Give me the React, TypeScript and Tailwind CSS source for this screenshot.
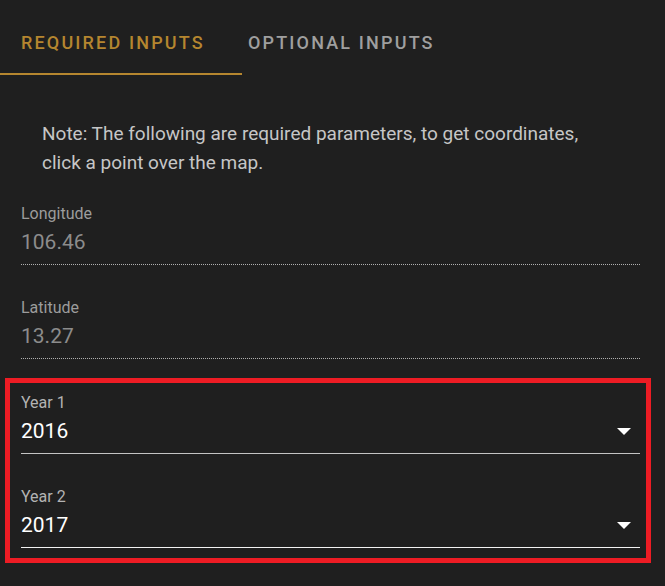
import React from "react";

type Field = { label: string; value: string };

const READONLY_FIELDS: Field[] = [
  { label: "Longitude", value: "106.46" },
  { label: "Latitude", value: "13.27" },
];

const YEAR_FIELDS: { label: string; value: string; line: string }[] = [
  { label: "Year 1", value: "2016", line: "border-[#c4c4c4]" },
  { label: "Year 2", value: "2017", line: "border-[#f2f2f2]" },
];

function CaretDown() {
  return (
    <svg width="14" height="7" viewBox="0 0 14 7" className="shrink-0" aria-hidden>
      <path d="M0 0 L14 0 L7 7 Z" fill="#ffffff" />
    </svg>
  );
}

export default function App() {
  return (
    <div
      className="min-h-[586px] w-[665px] bg-[#1f1f1f] pb-10"
      style={{ fontFamily: "Roboto, 'Noto Sans', sans-serif" }}
    >
      {/* Tabs */}
      <div className="flex h-[75px]">
        <div className="w-[242px] border-b-2 border-[#b5862f] pl-[21px] pt-[31px]">
          <span className="text-[18px] leading-6 font-medium tracking-[0.12em] text-[#b5862f]">
            REQUIRED INPUTS
          </span>
        </div>
        <div className="pl-[6px] pt-[31px]">
          <span className="text-[18px] leading-6 font-medium tracking-[0.12em] text-[#9f9f9f]">
            OPTIONAL INPUTS
          </span>
        </div>
      </div>

      {/* Note */}
      <p className="mt-[44px] pl-[42px] pr-[60px] text-[19px] leading-[29px] text-[#c6c6c6]">
        Note: The following are required parameters, to get coordinates, click a point over the map.
      </p>

      <div className="mt-[27px] pl-[21px] pr-[25px]">
        {READONLY_FIELDS.map((f, i) => (
          <div key={f.label} className={i === 0 ? "" : "pt-[33px]"}>
            <div className="text-[16px] leading-5 text-[#9c9c9c]">{f.label}</div>
            <div className="mt-[3px] border-b border-dotted border-[#b0b0b0] pb-[7px] text-[21px] leading-[30px] text-[#8c8c8c]">
              {f.value}
            </div>
          </div>
        ))}

        {/* Year selects, outlined in red */}
        <div className="relative mt-[1px]">
          {YEAR_FIELDS.map((f) => (
            <div key={f.label} className="pt-[33px]">
              <div className="text-[16px] leading-5 text-[#b3b3b3]">{f.label}</div>
              <div
                className={`mt-[3px] flex items-center justify-between border-b ${f.line} pb-[7px] pr-[9px]`}
              >
                <span className="text-[21px] leading-[30px] text-white">{f.value}</span>
                <CaretDown />
              </div>
            </div>
          ))}
          <div className="pointer-events-none absolute -left-[16px] -right-[11px] top-[18px] -bottom-[15px] border-[5px] border-[#ed1c24]" />
        </div>
      </div>
    </div>
  );
}
